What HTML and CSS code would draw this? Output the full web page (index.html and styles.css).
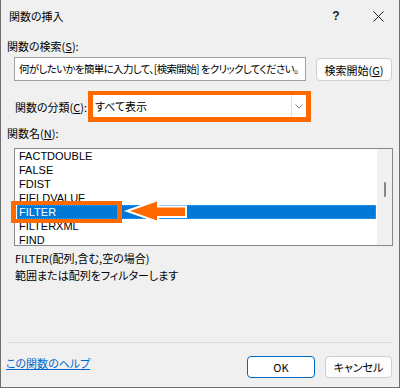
FILE: index.html
```html
<!DOCTYPE html>
<html lang="ja">
<head>
<meta charset="utf-8">
<title>関数の挿入</title>
<link rel="stylesheet" href="styles.css">
</head>
<body>
<div class="window">
  <div class="titlebar">
    <span class="title">関数の挿入</span>
    <span class="help">?</span>
    <span class="close"><svg width="11" height="11" viewBox="0 0 11 11"><path d="M0.5 0.5 L10.5 10.5 M10.5 0.5 L0.5 10.5" stroke="#222" stroke-width="1" fill="none"/></svg></span>
  </div>
  <div class="label l-search">関数の検索(<u>S</u>):</div>
  <div class="search-row">
    <div class="search-box"><span class="search-text">何がしたいかを簡単に入力して、[検索開始] をクリックしてください。</span></div>
    <button class="btn btn-search">検索開始(<u>G</u>)</button>
  </div>
  <div class="cat-row">
    <span class="cat-label">関数の分類(<u>C</u>):</span>
    <div class="combo">
      <span class="combo-text">すべて表示</span>
      <span class="combo-drop"><svg width="8" height="5" viewBox="0 0 8 5"><path d="M0.5 0.5 L4 4 L7.5 0.5" stroke="#8a8a8a" stroke-width="1" fill="none"/></svg></span>
    </div>
  </div>
  <div class="label l-name">関数名(<u>N</u>):</div>
  <div class="list">
    <div class="items">
      <div class="item">FACTDOUBLE</div>
      <div class="item">FALSE</div>
      <div class="item">FDIST</div>
      <div class="item">FIELDVALUE</div>
      <div class="item sel">FILTER</div>
      <div class="item">FILTERXML</div>
      <div class="item">FIND</div>
    </div>
    <div class="scrollbar"><div class="thumb"></div></div>
    <div class="mark-box"></div>
    <svg class="arrow" width="85" height="32" viewBox="0 0 85 32"><polygon points="8,17 35,7.5 35,13.5 63,13.5 63,22 35,22 35,26.5" fill="#ff6a00" stroke="#ffffff" stroke-width="4" paint-order="stroke"/></svg>
  </div>
  <div class="syntax">FILTER(配列,含む,空の場合)</div>
  <div class="desc">範囲または配列をフィルターします</div>
  <div class="sep"></div>
  <div class="footer">
    <span class="link">この関数のヘルプ</span>
    <button class="btn btn-ok">OK</button>
    <button class="btn btn-cancel">キャンセル</button>
  </div>
</div>
</body>
</html>
```

FILE: styles.css
```css
html, body {
  margin: 0;
  padding: 0;
}

.window {
  width: 400px;
  height: 388px;
  box-sizing: border-box;
  border: 1px solid #6e6e6e;
  border-top: none;
  background: #f0f0f0;
  font-family: "Noto Sans CJK JP", sans-serif;
  font-size: 11px;
  line-height: 14px;
  font-feature-settings: "palt";
  color: #000;
}

.titlebar {
  height: 32px;
  display: flex;
  align-items: center;
  padding: 0 15px 0 8px;
}

.title {
  flex: 1;
}

.help {
  width: 12px;
  text-align: center;
  font-family: "Liberation Sans", sans-serif;
  font-size: 12px;
  font-weight: bold;
  color: #222;
}

.close {
  margin-left: 31px;
  width: 11px;
  height: 11px;
  display: flex;
}

.label {
  margin-left: 6px;
}

.l-search {
  margin-top: 7px;
}

.search-row {
  display: flex;
  margin: 4px 0 0 13px;
}

.search-box {
  width: 292px;
  height: 24px;
  box-sizing: border-box;
  border: 1px solid #a0a0a0;
  background: #fff;
  padding: 3px 0 0 4px;
  white-space: nowrap;
  overflow: hidden;
}

.search-text {
  font-size: 10.5px;
  letter-spacing: -0.65px;
}

.btn {
  box-sizing: border-box;
  background: #fdfdfd;
  border: 1px solid #d0d0d0;
  border-radius: 4px;
  font: inherit;
  color: #000;
  padding: 0;
  line-height: 14px;
}

.btn-search {
  margin: 1px 0 0 10px;
  width: 76px;
  height: 23px;
}

.cat-row {
  display: flex;
  align-items: center;
  margin: 10px 0 0 14px;
}

.cat-label {
  width: 73px;
}

.combo {
  width: 223px;
  height: 31px;
  box-sizing: border-box;
  border: 5px solid #ff6a00;
  border-top-width: 4px;
  background: #fff;
  display: flex;
  align-items: center;
}

.combo-text {
  flex: 1;
  padding-left: 2px;
}

.combo-drop {
  width: 14px;
  align-self: stretch;
  border-left: 1px solid #e2e2e2;
  display: flex;
  align-items: center;
  justify-content: center;
}

.l-name {
  margin-top: 4px;
}

.list {
  position: relative;
  margin: 8px 0 0 13px;
  width: 379px;
  height: 98px;
  box-sizing: border-box;
  border: 1px solid #828790;
  background: #fff;
  display: flex;
}

.items {
  flex: 1;
  overflow: hidden;
  font-family: "Liberation Sans", sans-serif;
  font-size: 11px;
}

.item {
  height: 14px;
  line-height: 14px;
  padding-left: 2px;
  margin: 0 1px 0 2px;
  white-space: nowrap;
}

.item.sel {
  background: #0078d7;
  color: #fff;
  outline: 1px dotted #8a8a8a;
  outline-offset: -1px;
}

.scrollbar {
  width: 15px;
  background: #f0f0f0;
  padding-top: 33px;
  box-sizing: border-box;
}

.thumb {
  width: 2px;
  height: 15px;
  margin-left: 7px;
  background: #858585;
  border-radius: 1px;
}

.mark-box {
  position: absolute;
  left: -4px;
  top: 52px;
  width: 111px;
  height: 22px;
  box-sizing: border-box;
  border: 4px solid #ff6a00;
  border-left-width: 5px;
  border-right-width: 5px;
}

.arrow {
  position: absolute;
  left: 107px;
  top: 45px;
}

.syntax {
  margin: 5px 0 0 14px;
}

.desc {
  margin: 3px 0 0 14px;
}

.sep {
  margin: 60px 6px 0 6px;
  height: 1px;
  background: #dadada;
}

.footer {
  display: flex;
  margin-top: 13px;
  padding: 0 7px 0 5px;
  height: 22px;
}

.link {
  color: #0066cc;
  text-decoration: underline;
  align-self: flex-start;
}

.btn-ok {
  margin-left: auto;
  width: 68px;
  height: 22px;
  background: #fff;
  border-color: #0067c0;
}

.btn-cancel {
  margin-left: 10px;
  width: 67px;
  height: 22px;
}
```
